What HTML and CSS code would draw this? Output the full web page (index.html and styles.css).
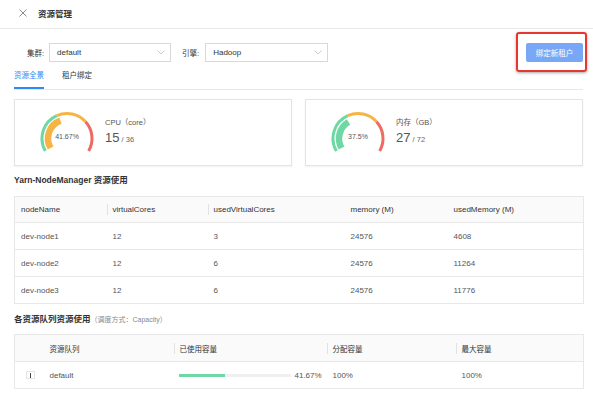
FILE: index.html
```html
<!DOCTYPE html>
<html lang="zh">
<head>
<meta charset="utf-8">
<title>资源管理</title>
<link rel="stylesheet" href="styles.css">
</head>
<body>
<div class="header">
  <svg class="close" width="8" height="8" viewBox="0 0 8 8"><path d="M0.5 0.5L7.5 7.5M7.5 0.5L0.5 7.5" stroke="#8c8c8c" stroke-width="1" fill="none"/></svg>
  <span class="title">资源管理</span>
</div>
<div class="page">
  <div class="filters">
    <span class="label">集群:</span>
    <div class="select sel1"><span>default</span><svg class="chev" width="8" height="5" viewBox="0 0 8 5"><path d="M0.5 0.5L4 4L7.5 0.5" stroke="#bfbfbf" stroke-width="0.8" fill="none"/></svg></div>
    <span class="label label2">引擎:</span>
    <div class="select sel2"><span>Hadoop</span><svg class="chev" width="8" height="5" viewBox="0 0 8 5"><path d="M0.5 0.5L4 4L7.5 0.5" stroke="#bfbfbf" stroke-width="0.8" fill="none"/></svg></div>
    <div class="btn-wrap"><button class="btn">绑定新租户</button></div>
  </div>
  <div class="tabs">
    <div class="tab active">资源全景</div>
    <div class="tab">租户绑定</div>
  </div>
  <div class="cards">
    <div class="card">
      <svg class="gauge" width="56" height="44" viewBox="0 0 56 44">
        <path d="M6.35 40 A25 25 0 0 1 17.83 4.66" stroke="#6dd8a3" stroke-width="3" fill="none"/>
        <path d="M17.83 4.66 A25 25 0 0 1 46.58 10.77" stroke="#f5b443" stroke-width="3" fill="none"/>
        <path d="M46.58 10.77 A25 25 0 0 1 49.65 40" stroke="#ee6b62" stroke-width="3" fill="none"/>
        <path d="M11.55 37 A19 19 0 0 1 21.5 9.65" stroke="#f5b443" stroke-width="6.5" fill="none"/>
        <text x="28" y="28" text-anchor="middle" class="gtext">41.67%</text>
      </svg>
      <div class="info">
        <div class="info-label">CPU（core）</div>
        <div class="info-value"><span class="big">15</span><span class="small"> / 36</span></div>
      </div>
    </div>
    <div class="card">
      <svg class="gauge" width="56" height="44" viewBox="0 0 56 44">
        <path d="M6.35 40 A25 25 0 0 1 17.83 4.66" stroke="#6dd8a3" stroke-width="3" fill="none"/>
        <path d="M17.83 4.66 A25 25 0 0 1 46.58 10.77" stroke="#f5b443" stroke-width="3" fill="none"/>
        <path d="M46.58 10.77 A25 25 0 0 1 49.65 40" stroke="#ee6b62" stroke-width="3" fill="none"/>
        <path d="M11.55 37 A19 19 0 0 1 18.5 11.05" stroke="#6dd8a3" stroke-width="6.5" fill="none"/>
        <text x="28" y="28" text-anchor="middle" class="gtext">37.5%</text>
      </svg>
      <div class="info">
        <div class="info-label">内存（GB）</div>
        <div class="info-value"><span class="big">27</span><span class="small"> / 72</span></div>
      </div>
    </div>
  </div>
  <div class="section-title">Yarn-NodeManager 资源使用</div>
  <table class="tbl tbl1">
    <colgroup><col class="c1"><col class="c2"><col class="c3"><col class="c4"><col class="c5"></colgroup>
    <thead>
      <tr><th>nodeName</th><th class="sep">virtualCores</th><th class="sep">usedVirtualCores</th><th>memory (M)</th><th>usedMemory (M)</th></tr>
    </thead>
    <tbody>
      <tr><td>dev-node1</td><td>12</td><td>3</td><td>24576</td><td>4608</td></tr>
      <tr><td>dev-node2</td><td>12</td><td>6</td><td>24576</td><td>11264</td></tr>
      <tr><td>dev-node3</td><td>12</td><td>6</td><td>24576</td><td>11776</td></tr>
    </tbody>
  </table>
  <div class="section-title title2">各资源队列资源使用<span class="sub">（调度方式：Capacity）</span></div>
  <table class="tbl tbl2">
    <colgroup><col class="d1"><col class="d2"><col class="d3"><col class="d4"><col class="d5"></colgroup>
    <thead>
      <tr><th></th><th class="zh">资源队列</th><th class="sep zh">已使用容量</th><th class="sep zh">分配容量</th><th class="sep zh">最大容量</th></tr>
    </thead>
    <tbody>
      <tr>
        <td class="exp-cell"><span class="exp"></span></td>
        <td>default</td>
        <td class="prog-cell"><div class="prog"><div class="track"><div class="fill" style="width:41.67%"></div></div><span class="pct">41.67%</span></div></td>
        <td>100%</td>
        <td>100%</td>
      </tr>
    </tbody>
  </table>
</div>
</body>
</html>
```
FILE: styles.css
```css
* { box-sizing: border-box; }
body {
  margin: 0;
  background: #fff;
  font-family: "Liberation Sans", "Noto Sans CJK SC", sans-serif;
  font-size: 8px;
  color: #333;
}
.header {
  height: 29px;
  border-bottom: 1px solid #e8e8e8;
  display: flex;
  align-items: center;
  padding: 0 0 2px 19px;
}
.close { display: block; }
.title {
  margin-left: 11px;
  font-size: 8.5px;
  font-weight: bold;
  color: #333;
}
.page { padding: 0 10px 0 14px; }
.filters {
  display: flex;
  align-items: center;
  margin-top: 14px;
  height: 19px;
  padding-left: 13px;
}
.label { font-size: 7.5px; color: #333; margin-right: 5px; }
.label2 { margin-left: 11px; margin-right: 6px; }
.select {
  height: 19px;
  border: 1px solid #d9d9d9;
  display: flex;
  align-items: center;
  justify-content: space-between;
  padding: 0 5px 0 7px;
  color: #333;
  font-size: 8px;
}
.sel1 { width: 122px; }
.sel2 { width: 123px; }
.chev { display: block; }
.btn-wrap {
  margin-left: auto;
  position: relative;
}
.btn-wrap::after {
  content: "";
  position: absolute;
  left: -10px; top: -11px; right: -4px; bottom: -10px;
  border: 2px solid #e8372f;
  border-radius: 3px;
  box-shadow: 0 1px 3px rgba(0,0,0,0.35);
}
.btn {
  display: block;
  width: 57px;
  height: 19px;
  border: none;
  border-radius: 2px;
  background: #78a7f6;
  color: #fff;
  font-family: "Liberation Sans", "Noto Sans CJK SC", sans-serif;
  font-size: 7.5px;
  padding: 0;
}
.tabs {
  margin-top: 8px;
  display: flex;
  gap: 18px;
  border-bottom: 1px solid #e8e8e8;
}
.tab {
  font-size: 7.5px;
  line-height: 12px;
  padding-bottom: 7px;
  color: #333;
}
.tab.active {
  color: #2f8af5;
  box-shadow: inset 0 -2px 0 #2f8af5;
}
.cards {
  margin-top: 9px;
  display: grid;
  grid-template-columns: 1fr 1fr;
  gap: 13px;
}
.card {
  height: 67px;
  border: 1px solid #e4e4e4;
  box-shadow: 0 1px 2px rgba(0,0,0,0.06);
  display: flex;
  align-items: center;
  padding-left: 24px;
}
.gauge { display: block; margin-top: 1px; }
.gtext { font-size: 7px; fill: #555; font-family: "Liberation Sans", sans-serif; }
.info { margin-left: 10px; }
.info-label { font-size: 7.5px; line-height: 10px; color: #555; margin-bottom: 2px; }
.info-value { line-height: 16px; color: #555; }
.big { font-size: 13px; }
.small { font-size: 7.5px; color: #666; }
.section-title {
  margin: 8px 0 10px;
  line-height: 12px;
  font-size: 8.5px;
  font-weight: bold;
  color: #333;
}
.title2 { margin: 9px 0 8px; }
.sub { font-weight: normal; font-size: 7px; color: #888; }
.tbl {
  width: 100%;
  table-layout: fixed;
  border-collapse: collapse;
  border: 1px solid #e8e8e8;
}
.tbl th {
  background: #fafafa;
  font-weight: normal;
  text-align: left;
  color: #333;
  padding: 0 0 0 6px;
  height: 26px;
  border-bottom: 1px solid #e8e8e8;
  white-space: nowrap;
}
.tbl th.sep {
  background: linear-gradient(#e2e2e2, #e2e2e2) no-repeat left center / 1px 11px, #fafafa;
}
.tbl td {
  padding: 0 0 0 6px;
  height: 27px;
  border-bottom: 1px solid #e8e8e8;
  color: #555;
  white-space: nowrap;
}
.tbl2 th { height: 27px; }
.tbl .zh { font-size: 7.5px; }
.c1 { width: 92px; } .c2 { width: 101px; } .c3 { width: 137px; } .c4 { width: 103px; } .c5 { width: 136px; }
.d1 { width: 29px; } .d2 { width: 130px; } .d3 { width: 153px; } .d4 { width: 129px; } .d5 { width: 128px; }
.exp-cell { padding-left: 11px !important; }
.exp {
  display: flex;
  justify-content: center;
  align-items: center;
  width: 9px;
  height: 8px;
  border: 1px solid #e4e4e4;
  background: #fff;
}
.exp::before {
  content: "";
  width: 1px;
  height: 5px;
  background: #444;
}
.prog-cell { padding-left: 5px !important; }
.prog { display: flex; align-items: center; }
.track {
  width: 112px;
  height: 3px;
  background: #f0f0f0;
}
.fill { height: 3px; background: #6dd8a3; }
.pct { margin-left: 4px; color: #555; }
```
